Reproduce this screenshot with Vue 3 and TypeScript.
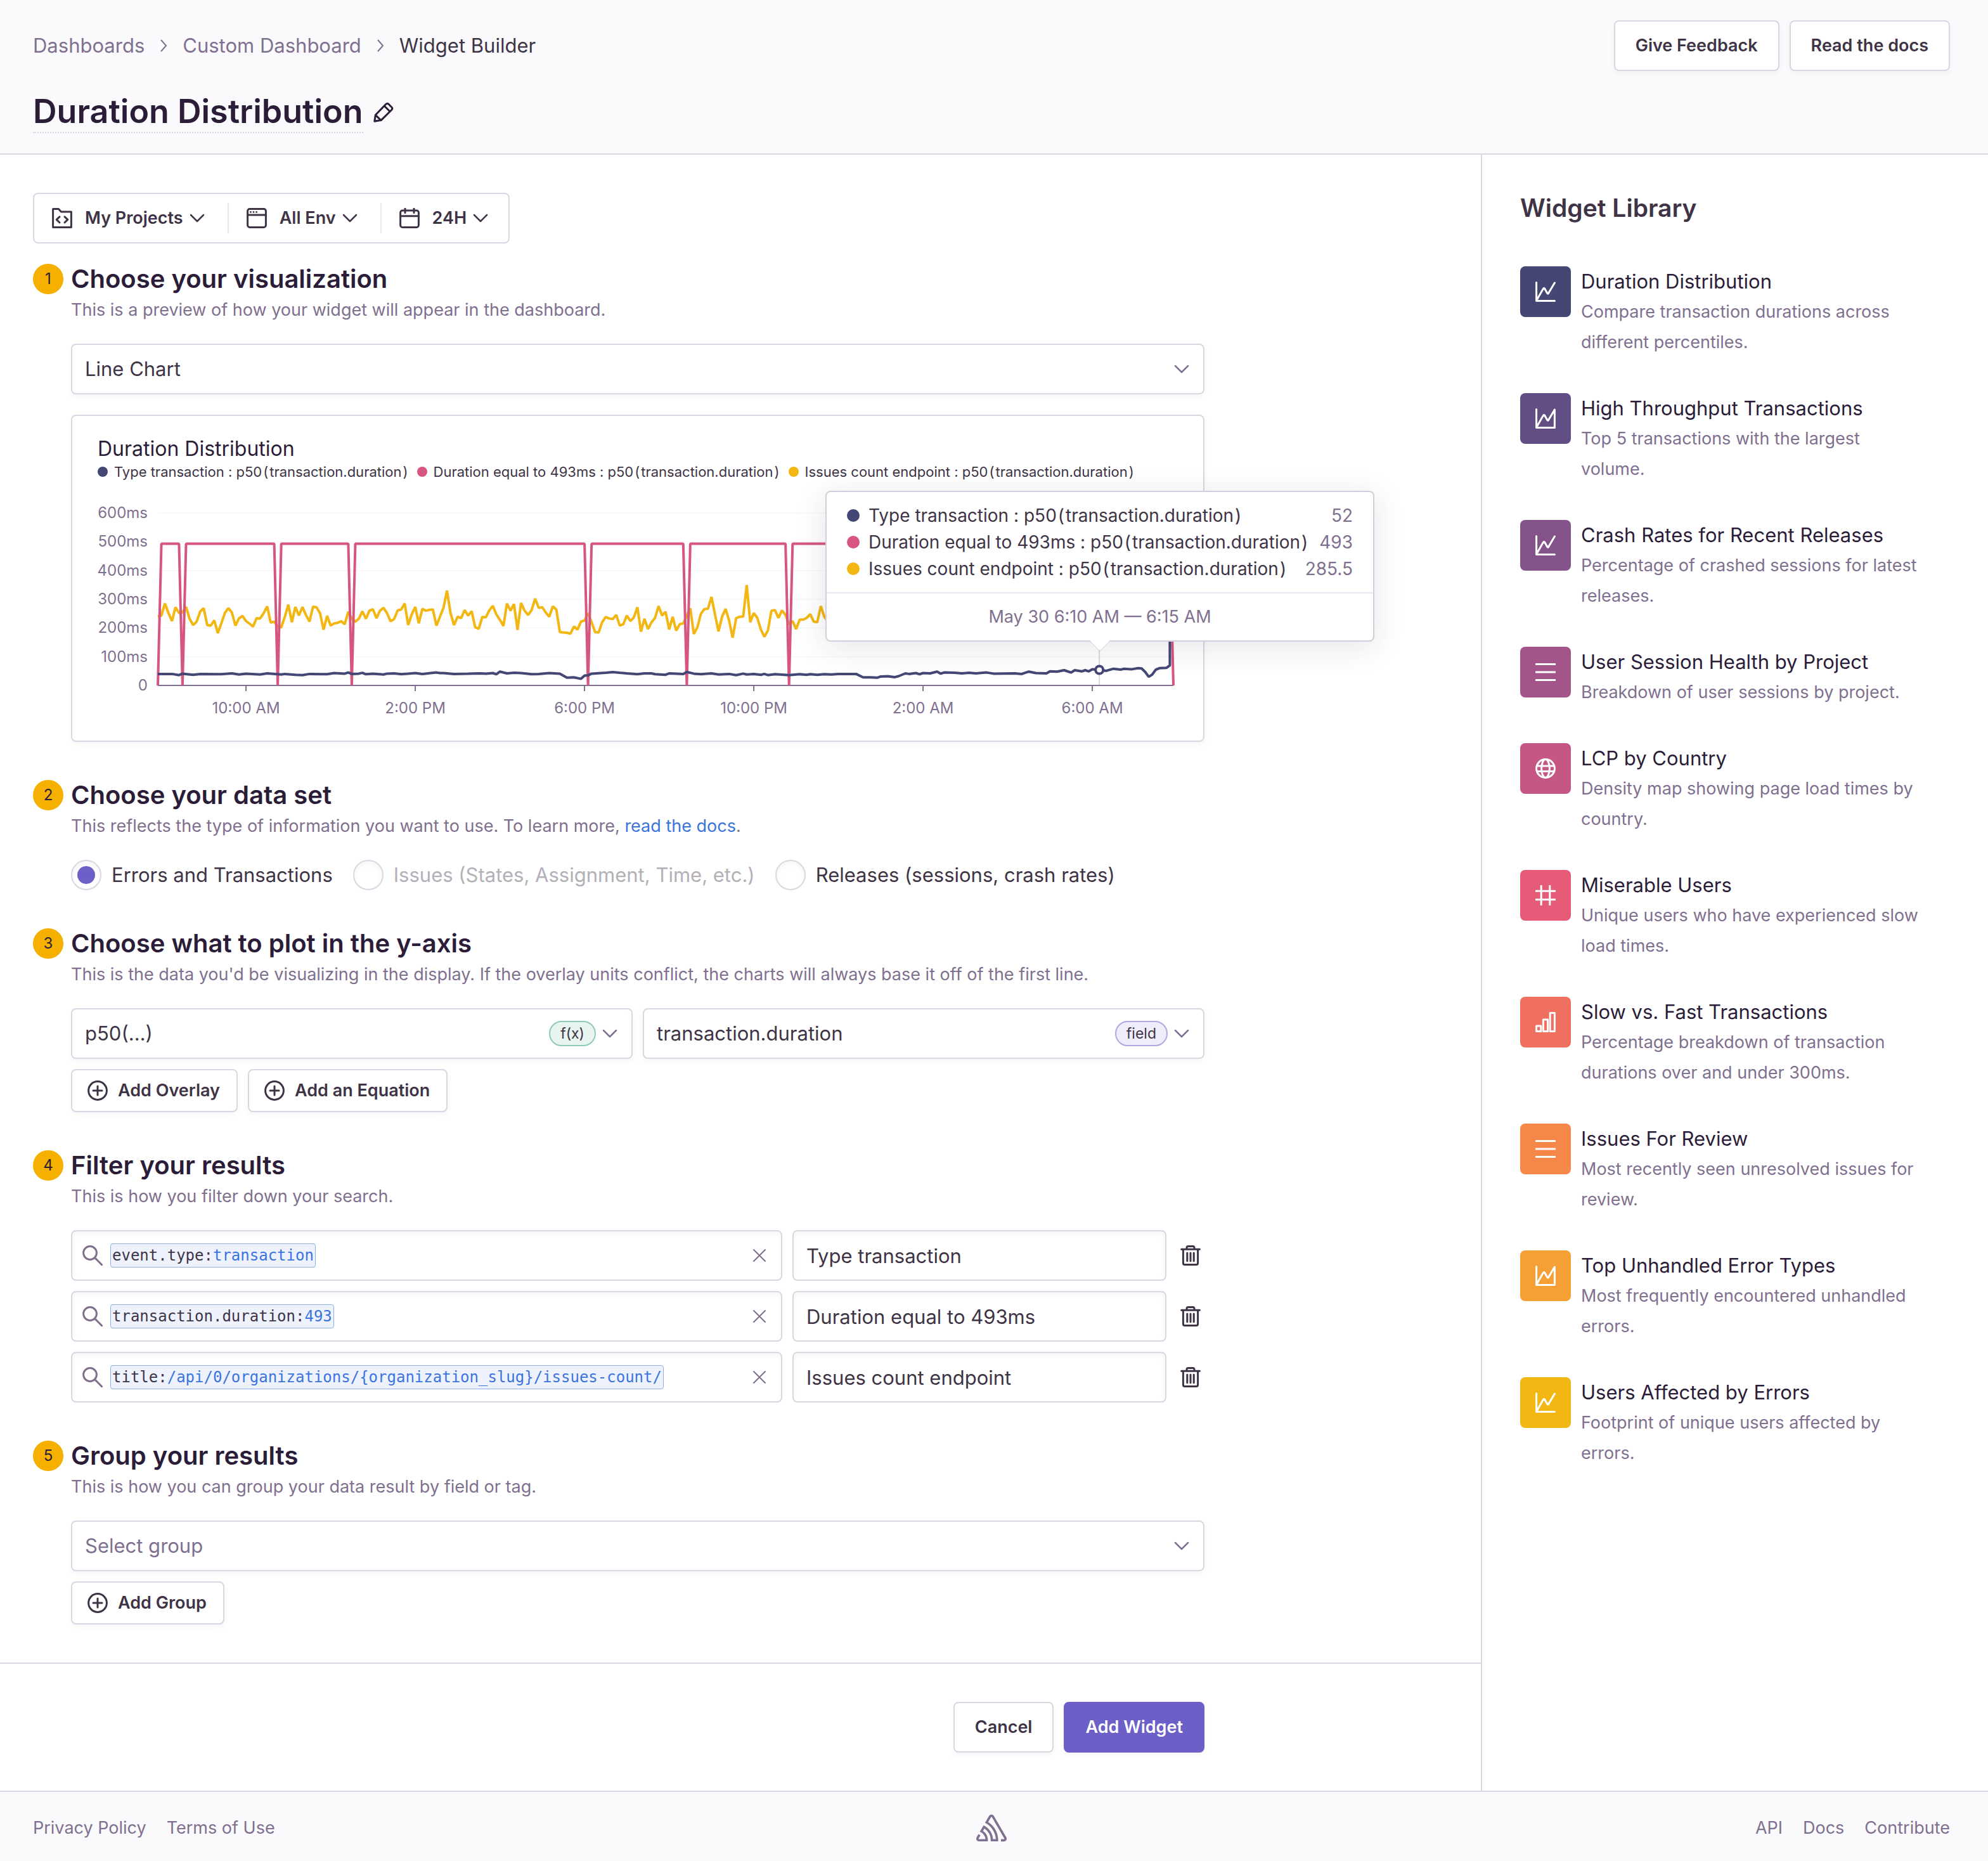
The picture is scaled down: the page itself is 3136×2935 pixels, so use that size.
<script setup lang="ts">
import { ref } from 'vue'

interface Series {
  name: string
  fn: string
  arg: string
  color: string
  value: string
}

interface LibraryItem {
  title: string
  text: string
  icon: 'line' | 'area' | 'list' | 'globe' | 'hash' | 'bars'
  color: string
}

const series: Series[] = [
  { name: 'Type transaction', fn: 'p50', arg: 'transaction.duration', color: '#444674', value: '52' },
  { name: 'Duration equal to 493ms', fn: 'p50', arg: 'transaction.duration', color: '#d6567f', value: '493' },
  { name: 'Issues count endpoint', fn: 'p50', arg: 'transaction.duration', color: '#f2b712', value: '285.5' },
]

const library: LibraryItem[] = [
  { title: 'Duration Distribution', text: 'Compare transaction durations across different percentiles.', icon: 'line', color: '#444674' },
  { title: 'High Throughput Transactions', text: 'Top 5 transactions with the largest volume.', icon: 'area', color: '#624d84' },
  { title: 'Crash Rates for Recent Releases', text: 'Percentage of crashed sessions for latest releases.', icon: 'line', color: '#835389' },
  { title: 'User Session Health by Project', text: 'Breakdown of user sessions by project.', icon: 'list', color: '#a35488' },
  { title: 'LCP by Country', text: 'Density map showing page load times by country.', icon: 'globe', color: '#c65683' },
  { title: 'Miserable Users', text: 'Unique users who have experienced slow load times.', icon: 'hash', color: '#e55b78' },
  { title: 'Slow vs. Fast Transactions', text: 'Percentage breakdown of transaction durations over and under 300ms.', icon: 'bars', color: '#ef7061' },
  { title: 'Issues For Review', text: 'Most recently seen unresolved issues for review.', icon: 'list', color: '#f58849' },
  { title: 'Top Unhandled Error Types', text: 'Most frequently encountered unhandled errors.', icon: 'area', color: '#f59f34' },
  { title: 'Users Affected by Errors', text: 'Footprint of unique users affected by errors.', icon: 'line', color: '#f2b712' },
]

const filters = ref([
  { key: 'event.type:', value: 'transaction', legend: 'Type transaction' },
  { key: 'transaction.duration:', value: '493', legend: 'Duration equal to 493ms' },
  { key: 'title:', value: '/api/0/organizations/{organization_slug}/issues-count/', legend: 'Issues count endpoint' },
])

const dataSet = ref('errors')

/* Plot area: 288 five-minute buckets across, 0-600ms up */
const plot = { left: 95, right: 1697, top: 29, bottom: 301 }
const px = (i: number) => plot.left + (i * (plot.right - plot.left)) / 288
const py = (v: number) => plot.bottom - (v * (plot.bottom - plot.top)) / 600
const toPoints = (pairs: number[][]) =>
  pairs.map(([i, v]) => `${px(i).toFixed(1)},${py(v).toFixed(1)}`).join(' ')

const gridLines = [0, 100, 200, 300, 400, 500, 600]
const ticks = [
  { i: 25, label: '10:00 AM' },
  { i: 73, label: '2:00 PM' },
  { i: 121, label: '6:00 PM' },
  { i: 169, label: '10:00 PM' },
  { i: 217, label: '2:00 AM' },
  { i: 265, label: '6:00 AM' },
]

const issueValues = [
  240, 243, 285, 252, 224, 272, 252, 254, 273, 232, 210, 222, 257, 269, 210, 208, 226, 182, 216, 252,
  269, 254, 208, 233, 242, 224, 215, 205, 234, 233, 251, 275, 219, 222, 205, 202, 239, 281, 220, 273,
  243, 273, 245, 222, 274, 272, 251, 194, 242, 208, 216, 218, 223, 213, 256, 232, 222, 232, 258, 232,
  260, 265, 234, 260, 270, 251, 223, 231, 261, 264, 285, 210, 247, 273, 216, 266, 260, 263, 264, 208,
  239, 270, 330, 251, 210, 239, 234, 262, 243, 258, 202, 197, 238, 237, 261, 277, 247, 228, 207, 285,
  260, 283, 193, 287, 260, 245, 262, 302, 270, 272, 254, 239, 275, 264, 186, 184, 183, 180, 205, 194,
  222, 226, 251, 220, 185, 184, 220, 238, 233, 231, 245, 208, 213, 243, 224, 237, 272, 187, 232, 196,
  220, 235, 276, 243, 256, 195, 239, 191, 213, 216, 243, 268, 179, 202, 249, 266, 267, 308, 247, 188,
  239, 266, 226, 166, 234, 239, 240, 349, 220, 252, 235, 195, 169, 191, 260, 262, 235, 261, 245, 213,
  224, 196, 229, 229, 235, 248, 222, 220, 276, 239, 222, 240,
]
const issuePoints = toPoints(issueValues.map((v, i) => [i, v]))

const drops = [7, 34, 55, 122, 150, 179]
const durationPairs: number[][] = [[0, 0], [1, 493]]
for (const d of drops) durationPairs.push([d - 1, 493], [d, 0], [d + 1, 493])
durationPairs.push([287, 493], [288, 0])
const durationPoints = toPoints(durationPairs)

const typePoints = toPoints([
  [0, 40], [4, 40], [6, 36], [7, 41], [10, 37], [12, 40], [18, 39], [21, 42], [23, 38], [25, 41],
  [29, 38], [31, 42], [35, 38], [36, 40], [39, 37], [41, 36], [43, 40], [48, 39], [50, 43], [53, 41],
  [54, 45], [55, 40], [57, 41], [58, 44], [59, 39], [61, 41], [64, 38], [65, 41], [67, 42], [69, 39],
  [71, 41], [73, 43], [75, 40], [79, 45], [80, 43], [81, 43], [84, 40], [88, 41], [91, 42], [93, 41],
  [95, 43], [96, 39], [97, 48], [99, 42], [101, 44], [103, 43], [106, 39], [108, 40], [111, 43],
  [114, 41], [116, 27], [118, 28], [120, 23], [121, 34], [122, 35], [123, 41], [127, 44], [129, 46],
  [131, 44], [133, 42], [136, 39], [138, 42], [140, 42], [141, 39], [144, 37], [145, 42], [149, 40],
  [150, 47], [152, 41], [154, 39], [157, 42], [159, 38], [162, 40], [164, 36], [166, 41], [167, 38],
  [169, 40], [171, 37], [172, 40], [173, 36], [175, 39], [179, 36], [182, 39], [184, 37], [185, 39],
  [187, 37], [189, 39], [191, 38], [193, 40], [198, 40], [200, 28], [202, 28], [204, 27], [205, 31],
  [207, 32], [209, 29], [210, 32], [212, 42], [213, 40], [215, 43], [216, 39], [217, 43], [219, 42],
  [221, 48], [222, 41], [223, 45], [226, 44], [228, 42], [230, 44], [232, 42], [235, 45], [237, 41],
  [243, 42], [245, 40], [247, 48], [249, 43], [252, 42], [253, 49], [255, 48], [257, 53], [259, 45],
  [260, 53], [262, 49], [263, 53], [264, 49], [265, 56], [267, 54], [269, 51], [271, 58], [273, 55],
  [274, 58], [276, 56], [278, 60], [279, 59], [280, 47], [281, 30], [282, 38], [283, 55], [284, 60],
  [286, 61], [287, 70], [287, 480],
])
</script>

<template>
  <div class="page">
    <header class="header">
      <div class="header-top">
        <nav class="crumbs" aria-label="Breadcrumb">
          <a href="#">Dashboards</a>
          <svg class="crumb-sep" viewBox="0 0 12 20"><path d="M2 1l8 9-8 9" /></svg>
          <a href="#">Custom Dashboard</a>
          <svg class="crumb-sep" viewBox="0 0 12 20"><path d="M2 1l8 9-8 9" /></svg>
          <span class="crumb-current">Widget Builder</span>
        </nav>
        <div class="row">
          <button type="button" class="btn">Give Feedback</button>
          <button type="button" class="btn">Read the docs</button>
        </div>
      </div>
      <div class="title-row">
        <h1>Duration Distribution</h1>
        <button type="button" class="icon-btn" aria-label="Edit title">
          <svg class="icon" viewBox="0 0 16 16">
            <path d="M.9 15.1l.8-5 8.2-8.5q1-1 2.100 0l2.400 2.400q1 1 0 2.100l-8.300 8.200zM8.600 3l4.400 4.400M1.700 10.200l4.200 4.100" />
          </svg>
        </button>
      </div>
    </header>

    <div class="body">
      <main class="main">
        <div class="builder">
          <div class="page-filters">
            <button type="button" class="page-filter">
              <svg class="icon" viewBox="0 0 16 16">
                <path d="M.8.8h4.400l2 2.200h8v12.200H.8zM6 6.900L3.600 9.200 6 11.500M10 6.900l2.400 2.300-2.400 2.300" />
              </svg>
              <span>My Projects</span>
              <svg class="chev" viewBox="0 0 24 14"><path d="M2 2l10 10L22 2" /></svg>
            </button>
            <button type="button" class="page-filter">
              <svg class="icon" viewBox="0 0 16 16">
                <rect x=".8" y=".8" width="14.400" height="14.400" rx="1.600" />
                <path d="M.8 5.500h14.400" />
                <g class="solid"><circle cx="3.200" cy="3.200" r=".7" /><circle cx="5.500" cy="3.200" r=".7" /><circle cx="7.800" cy="3.200" r=".7" /></g>
              </svg>
              <span>All Env</span>
              <svg class="chev" viewBox="0 0 24 14"><path d="M2 2l10 10L22 2" /></svg>
            </button>
            <button type="button" class="page-filter">
              <svg class="icon" viewBox="0 0 16 16">
                <rect x=".8" y="2" width="14.400" height="13.200" rx="1.600" />
                <path d="M.8 6.400h14.400M4.500.2v3.600M11.500.2v3.600" />
              </svg>
              <span>24H</span>
              <svg class="chev" viewBox="0 0 24 14"><path d="M2 2l10 10L22 2" /></svg>
            </button>
          </div>

          <ol class="steps">
            <li class="step">
              <span class="badge">1</span>
              <div class="step-body">
                <h2>Choose your visualization</h2>
                <p class="desc">This is a preview of how your widget will appear in the dashboard.</p>
                <div class="field">
                  <select aria-label="Visualization"><option>Line Chart</option></select>
                  <div class="field-end"><svg class="chev muted" viewBox="0 0 24 14"><path d="M2 2l10 10L22 2" /></svg></div>
                </div>
                <section class="panel">
                  <h3>Duration Distribution</h3>
                  <ul class="legend">
                    <li v-for="s in series" :key="s.name">
                      <i class="dot" :style="{ background: s.color }"></i>
                      <span>{{ s.name }} : {{ s.fn }}<b>(</b>{{ s.arg }}<b>)</b></span>
                    </li>
                  </ul>
                  <svg class="chart" viewBox="0 0 1704 360" role="img" aria-label="Duration Distribution">
                    <g v-for="g in gridLines" :key="g">
                      <line v-if="g" class="grid" :x1="plot.left" :x2="plot.right" :y1="py(g)" :y2="py(g)" />
                      <text class="axis-label" x="79" :y="py(g) + 8" text-anchor="end">{{ g ? g + 'ms' : '0' }}</text>
                    </g>
                    <line class="axis" :x1="plot.left" :x2="plot.right" :y1="plot.bottom" :y2="plot.bottom" />
                    <g v-for="t in ticks" :key="t.label">
                      <line class="axis" :x1="px(t.i)" :x2="px(t.i)" y1="301" y2="310" />
                      <text class="axis-label" :x="px(t.i)" y="345" text-anchor="middle">{{ t.label }}</text>
                    </g>
                    <line class="crosshair" :x1="px(267)" :x2="px(267)" y1="230" y2="300" />
                    <polyline class="series" :points="issuePoints" :stroke="series[2].color" />
                    <polyline class="series" :points="durationPoints" :stroke="series[1].color" />
                    <polyline class="series" :points="typePoints" :stroke="series[0].color" />
                    <circle class="marker" :cx="px(267)" :cy="py(54)" r="6" />
                  </svg>
                  <div class="tooltip" role="tooltip">
                    <ul>
                      <li v-for="s in series" :key="s.name">
                        <i class="dot" :style="{ background: s.color }"></i>
                        <span>{{ s.name }} : {{ s.fn }}<b>(</b>{{ s.arg }}<b>)</b></span>
                        <em>{{ s.value }}</em>
                      </li>
                    </ul>
                    <div class="tooltip-date">May 30 6:10 AM — 6:15 AM</div>
                    <svg class="tooltip-arrow" viewBox="0 0 32 18"><path class="fill" d="M0 0h32L16 16z" /><path class="edge" d="M0 1l16 16L32 1" /></svg>
                  </div>
                </section>
              </div>
            </li>

            <li class="step">
              <span class="badge">2</span>
              <div class="step-body">
                <h2>Choose your data set</h2>
                <p class="desc">This reflects the type of information you want to use. To learn more, <a href="#">read the docs</a>.</p>
                <div class="radios">
                  <label><input v-model="dataSet" type="radio" name="dataset" value="errors" />Errors and Transactions</label>
                  <label class="disabled"><input v-model="dataSet" type="radio" name="dataset" value="issues" disabled />Issues (States, Assignment, Time, etc.)</label>
                  <label><input v-model="dataSet" type="radio" name="dataset" value="releases" />Releases (sessions, crash rates)</label>
                </div>
              </div>
            </li>

            <li class="step">
              <span class="badge">3</span>
              <div class="step-body">
                <h2>Choose what to plot in the y-axis</h2>
                <p class="desc">This is the data you'd be visualizing in the display. If the overlay units conflict, the charts will always base it off of the first line.</p>
                <div class="row">
                  <div class="field">
                    <select aria-label="Function"><option>p50(…)</option></select>
                    <div class="field-end">
                      <span class="pill green">f(x)</span>
                      <svg class="chev muted" viewBox="0 0 24 14"><path d="M2 2l10 10L22 2" /></svg>
                    </div>
                  </div>
                  <div class="field">
                    <select aria-label="Field"><option>transaction.duration</option></select>
                    <div class="field-end">
                      <span class="pill purple">field</span>
                      <svg class="chev muted" viewBox="0 0 24 14"><path d="M2 2l10 10L22 2" /></svg>
                    </div>
                  </div>
                </div>
                <div class="row">
                  <button v-for="b in ['Add Overlay', 'Add an Equation']" :key="b" type="button" class="btn add">
                    <svg class="icon" viewBox="0 0 16 16"><circle cx="8" cy="8" r="7.200" /><path d="M8 4.500v7M4.500 8h7" /></svg>
                    {{ b }}
                  </button>
                </div>
              </div>
            </li>

            <li class="step">
              <span class="badge">4</span>
              <div class="step-body">
                <h2>Filter your results</h2>
                <p class="desc">This is how you filter down your search.</p>
                <div v-for="f in filters" :key="f.key" class="filter-row">
                  <div class="search">
                    <svg class="icon muted" viewBox="0 0 16 16"><circle cx="6" cy="6" r="5.200" /><path d="M9.800 9.800l5.700 5.700" /></svg>
                    <span class="token"><strong>{{ f.key }}</strong>{{ f.value }}</span>
                    <input type="text" aria-label="Search filter" />
                    <button type="button" class="icon-btn" aria-label="Clear search">
                      <svg class="clear" viewBox="0 0 20 20"><path d="M1 1l18 18M19 1L1 19" /></svg>
                    </button>
                  </div>
                  <input v-model="f.legend" class="alias" type="text" aria-label="Legend alias" />
                  <button type="button" class="icon-btn trash" aria-label="Delete filter">
                    <svg class="icon" viewBox="0 0 16 16">
                      <path d="M.8 3.100h14.400M2.200 3.300v10.700q0 1.200 1.200 1.200h9.200q1.200 0 1.200-1.200V3.300M5 3V2q0-1.200 1.200-1.200h3.600Q11 .8 11 2v1M5.400 6v6.400M8 6v6.400M10.600 6v6.400" />
                    </svg>
                  </button>
                </div>
              </div>
            </li>

            <li class="step">
              <span class="badge">5</span>
              <div class="step-body">
                <h2>Group your results</h2>
                <p class="desc">This is how you can group your data result by field or tag.</p>
                <div class="field">
                  <select class="placeholder" aria-label="Group"><option>Select group</option></select>
                  <div class="field-end"><svg class="chev muted" viewBox="0 0 24 14"><path d="M2 2l10 10L22 2" /></svg></div>
                </div>
                <div class="row">
                  <button type="button" class="btn add">
                    <svg class="icon" viewBox="0 0 16 16"><circle cx="8" cy="8" r="7.200" /><path d="M8 4.500v7M4.500 8h7" /></svg>
                    Add Group
                  </button>
                </div>
              </div>
            </li>
          </ol>
        </div>

        <div class="actions">
          <div class="actions-inner">
            <button type="button" class="btn">Cancel</button>
            <button type="button" class="btn primary">Add Widget</button>
          </div>
        </div>
      </main>

      <aside class="library">
        <h2>Widget Library</h2>
        <ul>
          <li v-for="w in library" :key="w.title">
            <span class="tile" :style="{ background: w.color }">
              <svg class="icon" viewBox="0 0 16 16">
                <path v-if="w.icon === 'line'" d="M.8.800v14.400h14.400M.8 15L6.300 5.500q.5-.8 1 0l2.100 3.800q.4.700.9 0L15.200 1" />
                <path v-else-if="w.icon === 'area'" d="M.8.800v14.400h14.400V1l-4.900 8.300q-.5.700-.9 0L7.300 5.500q-.5-.8-1 0L.8 15" />
                <path v-else-if="w.icon === 'list'" d="M.5 1.800h15M.5 8h15M.5 14.200h15" />
                <path v-else-if="w.icon === 'hash'" d="M4.600.5v15M11.400.5v15M.5 4.600h15M.5 11.400h15" />
                <path v-else-if="w.icon === 'bars'" d="M.8 11h3.600v4.200H.8zM6.200 6h3.600v9.200H6.200zM11.600.800h3.600v14.400h-3.600z" />
                <g v-else>
                  <circle cx="8" cy="8" r="7.200" />
                  <ellipse cx="8" cy="8" rx="3.200" ry="7.200" />
                  <path d="M1.200 6h13.600M1.200 10.200h13.600" />
                </g>
              </svg>
            </span>
            <div>
              <h3>{{ w.title }}</h3>
              <p>{{ w.text }}</p>
            </div>
          </li>
        </ul>
      </aside>
    </div>

    <footer class="footer">
      <div class="links"><a href="#">Privacy Policy</a><a href="#">Terms of Use</a></div>
      <svg class="logo" viewBox="0 0 24 24" aria-label="Sentry">
        <path d="M13.910 2.505c-.873-1.448-2.972-1.448-3.844 0L6.904 7.920a15.478 15.478 0 0 1 8.530 12.811h-2.221A13.301 13.301 0 0 0 5.784 9.814l-2.926 5.060a7.650 7.650 0 0 1 4.435 5.848H2.194a.365.365 0 0 1-.298-.534l1.413-2.402a5.160 5.160 0 0 0-1.614-.913L.296 19.275a2.182 2.182 0 0 0 .812 2.999 2.240 2.240 0 0 0 1.086.288h6.983a9.322 9.322 0 0 0-3.845-8.318l1.110-1.922a11.470 11.470 0 0 1 4.950 10.240h5.915a17.242 17.242 0 0 0-7.885-15.280l2.244-3.845a.370.370 0 0 1 .504-.130c.255.140 9.750 16.708 9.928 16.900a.365.365 0 0 1-.327.543h-2.287c.029.612.029 1.223 0 1.831h2.297a2.206 2.206 0 0 0 1.922-3.310z" />
      </svg>
      <div class="links end"><a href="#">API</a><a href="#">Docs</a><a href="#">Contribute</a></div>
    </footer>
  </div>
</template>

<style>
body {
  margin: 0;
  background: #fff;
}
</style>

<style scoped>
.page {
  --gray500: #2b1d38;
  --gray400: #3e3446;
  --gray300: #80708f;
  --border: #dbd6e1;
  --shadow: 0 4px 8px rgba(43, 29, 56, 0.04);
  --inset: inset 0 4px 8px rgba(43, 29, 56, 0.04);
  display: flex;
  flex-direction: column;
  min-height: 100vh;
  font-family: Inter, 'Liberation Sans', sans-serif;
  font-size: 31px;
  line-height: 48px;
  color: var(--gray400);
}
.page *,
.page {
  box-sizing: border-box;
}
h1, h2, h3, p, ul, ol {
  margin: 0;
  padding: 0;
}
ul, ol {
  list-style: none;
}
button, input, select {
  margin: 0;
  font: inherit;
  color: inherit;
}
a {
  color: var(--gray300);
  text-decoration: none;
}
svg {
  display: block;
  flex: none;
  fill: none;
  stroke: currentColor;
}
.icon {
  width: 32px;
  height: 32px;
  stroke-width: 1.5;
  stroke-linecap: round;
  stroke-linejoin: round;
}
.icon .solid {
  fill: currentColor;
  stroke: none;
}
.chev {
  width: 24px;
  height: 14px;
  stroke-width: 2.5;
  stroke-linecap: round;
  stroke-linejoin: round;
}
.muted {
  color: var(--gray300);
}
.row {
  display: flex;
  gap: 16px;
}

/* Buttons */
.btn {
  height: 80px;
  padding: 0 32px;
  border: 2px solid var(--border);
  border-radius: 8px;
  background: #fff;
  box-shadow: var(--shadow);
  font-size: 27px;
  font-weight: 600;
  white-space: nowrap;
}
.btn.primary {
  border-color: #6c5fc7;
  background: #6c5fc7;
  color: #fff;
}
.btn.add {
  display: flex;
  align-items: center;
  gap: 16px;
  height: 68px;
  padding: 0 26px 0 24px;
}
.icon-btn {
  padding: 0;
  border: 0;
  background: none;
}

/* Header */
.header {
  padding: 32px 60px 32px 52px;
  border-bottom: 2px solid var(--border);
  background: #fafafc;
}
.header-top {
  display: flex;
  align-items: center;
  justify-content: space-between;
}
.crumbs {
  display: flex;
  align-items: center;
  gap: 24px;
}
.crumb-sep {
  width: 12px;
  height: 20px;
  stroke-width: 2;
  color: var(--gray300);
}
.title-row {
  display: flex;
  align-items: center;
  gap: 16px;
  margin-top: 32px;
  color: var(--gray500);
}
h1 {
  border-bottom: 2px dotted var(--border);
  font-size: 52px;
  line-height: 64px;
  font-weight: 600;
}

/* Body */
.body {
  display: grid;
  grid-template-columns: minmax(0, 1fr) 800px;
}
.builder {
  max-width: 1900px;
  padding: 60px 0 60px 52px;
}
.page-filters {
  display: inline-flex;
  align-items: center;
  height: 80px;
  border: 2px solid var(--border);
  border-radius: 8px;
  font-size: 27px;
  font-weight: 600;
}
.page-filter {
  display: flex;
  align-items: center;
  height: 48px;
  padding: 0 36px 0 28px;
  border: 0;
  border-left: 2px solid #ece8ef;
  background: none;
}
.page-filter:first-child {
  border-left: 0;
}
.page-filter:last-child {
  padding-right: 32px;
}
.page-filter span {
  margin: 0 10px 0 20px;
}
.steps {
  display: flex;
  flex-direction: column;
  gap: 60px;
  margin-top: 32px;
}
.step {
  display: flex;
  gap: 12px;
}
.badge {
  flex: none;
  width: 48px;
  height: 48px;
  border-radius: 50%;
  background: #f5b000;
  color: var(--gray500);
  font-size: 24px;
  text-align: center;
}
.step-body {
  flex: 1;
  min-width: 0;
}
.step h2 {
  color: var(--gray500);
  font-size: 40px;
  font-weight: 600;
  line-height: 48px;
}
.desc {
  margin: 4px 0 32px;
  color: var(--gray300);
  font-size: 27px;
  line-height: 42px;
}
.desc a {
  color: #3c74dd;
}
.field {
  position: relative;
  flex: 1;
}
.field select {
  display: block;
  width: 100%;
  height: 80px;
  padding: 0 20px;
  border: 2px solid var(--border);
  border-radius: 8px;
  background: #fff;
  box-shadow: var(--shadow);
  appearance: none;
}
.field .placeholder {
  color: var(--gray300);
}
.field-end {
  position: absolute;
  top: 0;
  right: 24px;
  display: flex;
  align-items: center;
  gap: 10px;
  height: 100%;
  pointer-events: none;
}
.pill {
  height: 40px;
  padding: 0 16px;
  border: 2px solid;
  border-radius: 20px;
  font-size: 23px;
  line-height: 36px;
}
.pill.green {
  border-color: #8fcbb5;
  background: #e8f4ef;
}
.pill.purple {
  border-color: #b0a6e2;
  background: #f0edfa;
}
.row + .row,
.field + .row {
  margin-top: 16px;
}

/* Chart */
.panel {
  position: relative;
  margin-top: 32px;
  padding: 32px 40px 28px;
  border: 2px solid var(--border);
  border-radius: 8px;
  box-shadow: var(--shadow);
}
.panel h3 {
  color: var(--gray500);
  font-size: 32px;
  font-weight: 400;
  line-height: 40px;
}
.legend {
  display: flex;
  gap: 12px;
  font-size: 22px;
  line-height: 32px;
}
.legend li {
  display: flex;
  align-items: center;
  gap: 10px;
  white-space: nowrap;
}
.panel b {
  padding: 0 2px;
  font-weight: 400;
}
.dot {
  flex: none;
  width: 16px;
  height: 16px;
  border-radius: 50%;
}
.chart {
  width: 100%;
  height: auto;
  margin-top: 20px;
}
.grid {
  stroke: #f8f8fa;
  stroke-width: 2;
}
.axis {
  stroke: var(--gray300);
  stroke-width: 2;
}
.axis-label {
  fill: var(--gray300);
  stroke: none;
  font-size: 24px;
}
.crosshair {
  stroke: var(--border);
  stroke-width: 2;
}
.series {
  stroke-width: 4;
  stroke-linejoin: bevel;
}
.marker {
  fill: #fff;
  stroke: #444674;
  stroke-width: 4;
}
.tooltip {
  position: absolute;
  top: 118px;
  left: 1188px;
  width: 866px;
  border: 2px solid #d5cddd;
  border-radius: 8px;
  background: #fff;
  box-shadow: 0 8px 48px rgba(43, 29, 56, 0.12);
  font-size: 28px;
  line-height: 42px;
}
.tooltip ul {
  padding: 16px 32px;
}
.tooltip li {
  display: flex;
  align-items: center;
  gap: 14px;
  white-space: nowrap;
}
.tooltip .dot {
  width: 20px;
  height: 20px;
}
.tooltip em {
  margin-left: auto;
  color: var(--gray300);
  font-style: normal;
}
.tooltip-date {
  padding: 16px;
  border-top: 2px solid #ebe6ef;
  color: var(--gray300);
  font-size: 27px;
  text-align: center;
}
.tooltip-arrow {
  position: absolute;
  top: 100%;
  left: 50%;
  width: 32px;
  height: 18px;
  margin-left: -16px;
  stroke: none;
}
.tooltip-arrow .fill {
  fill: #fff;
}
.tooltip-arrow .edge {
  stroke: #d5cddd;
  stroke-width: 1;
}

/* Data set */
.radios {
  display: flex;
  gap: 32px;
}
.radios label {
  display: flex;
  align-items: center;
  gap: 16px;
  white-space: nowrap;
}
.radios .disabled {
  color: #b3b0b8;
}
.radios input {
  display: grid;
  place-items: center;
  width: 48px;
  height: 48px;
  border: 2px solid var(--border);
  border-radius: 50%;
  background: #fff;
  box-shadow: var(--inset);
  appearance: none;
}
.radios input:checked::before {
  content: '';
  width: 28px;
  height: 28px;
  border-radius: 50%;
  background: #6c5fc7;
}

/* Filters */
.filter-row {
  display: grid;
  grid-template-columns: 1122fr 590fr 44px;
  column-gap: 16px;
}
.filter-row + .filter-row {
  margin-top: 16px;
}
.search,
.alias {
  width: 100%;
  min-width: 0;
  height: 80px;
  border: 2px solid var(--border);
  border-radius: 8px;
  background: #fff;
  box-shadow: var(--inset);
}
.search {
  display: flex;
  align-items: center;
  padding: 0 24px 0 16px;
}
.search input {
  flex: 1;
  min-width: 0;
  border: 0;
  background: none;
  outline: 0;
}
.alias {
  padding: 0 20px;
}
.token {
  margin-left: 12px;
  padding: 0 2px;
  border: 1px solid #8cb0eb;
  border-radius: 4px;
  background: #edf2fd;
  color: #3c74dd;
  font-family: 'DejaVu Sans Mono', 'Liberation Mono', monospace;
  font-size: 24px;
  line-height: 36px;
  white-space: nowrap;
}
.token strong {
  color: var(--gray400);
  font-weight: 400;
}
.clear {
  width: 20px;
  height: 20px;
  color: var(--gray300);
  stroke-width: 2;
  stroke-linecap: round;
}
.trash {
  justify-self: center;
}

/* Action bar */
.actions {
  padding: 60px 0;
  border-top: 2px solid var(--border);
}
.actions-inner {
  display: flex;
  justify-content: flex-end;
  gap: 16px;
  max-width: 1900px;
}

/* Library */
.library {
  padding: 60px 96px 0 60px;
  border-left: 2px solid var(--border);
}
.library h2 {
  font-size: 39px;
  font-weight: 600;
}
.library ul {
  display: flex;
  flex-direction: column;
  gap: 56px;
  margin-top: 68px;
}
.library li {
  display: flex;
  gap: 16px;
}
.tile {
  display: grid;
  flex: none;
  place-items: center;
  width: 80px;
  height: 80px;
  border-radius: 8px;
  color: #fff;
}
.library h3 {
  color: var(--gray500);
  font-size: 31px;
  font-weight: 400;
}
.library p {
  color: var(--gray300);
  font-size: 27px;
}

/* Footer */
.footer {
  display: grid;
  flex: 1;
  grid-template-columns: 1fr auto 1fr;
  align-items: center;
  padding: 32px 60px 28px 52px;
  border-top: 2px solid var(--border);
  background: #fafafc;
  font-size: 27px;
}
.links {
  display: flex;
  gap: 32px;
}
.links.end {
  justify-content: flex-end;
}
.logo {
  width: 48px;
  height: 48px;
  fill: var(--gray300);
  stroke: none;
}
</style>
